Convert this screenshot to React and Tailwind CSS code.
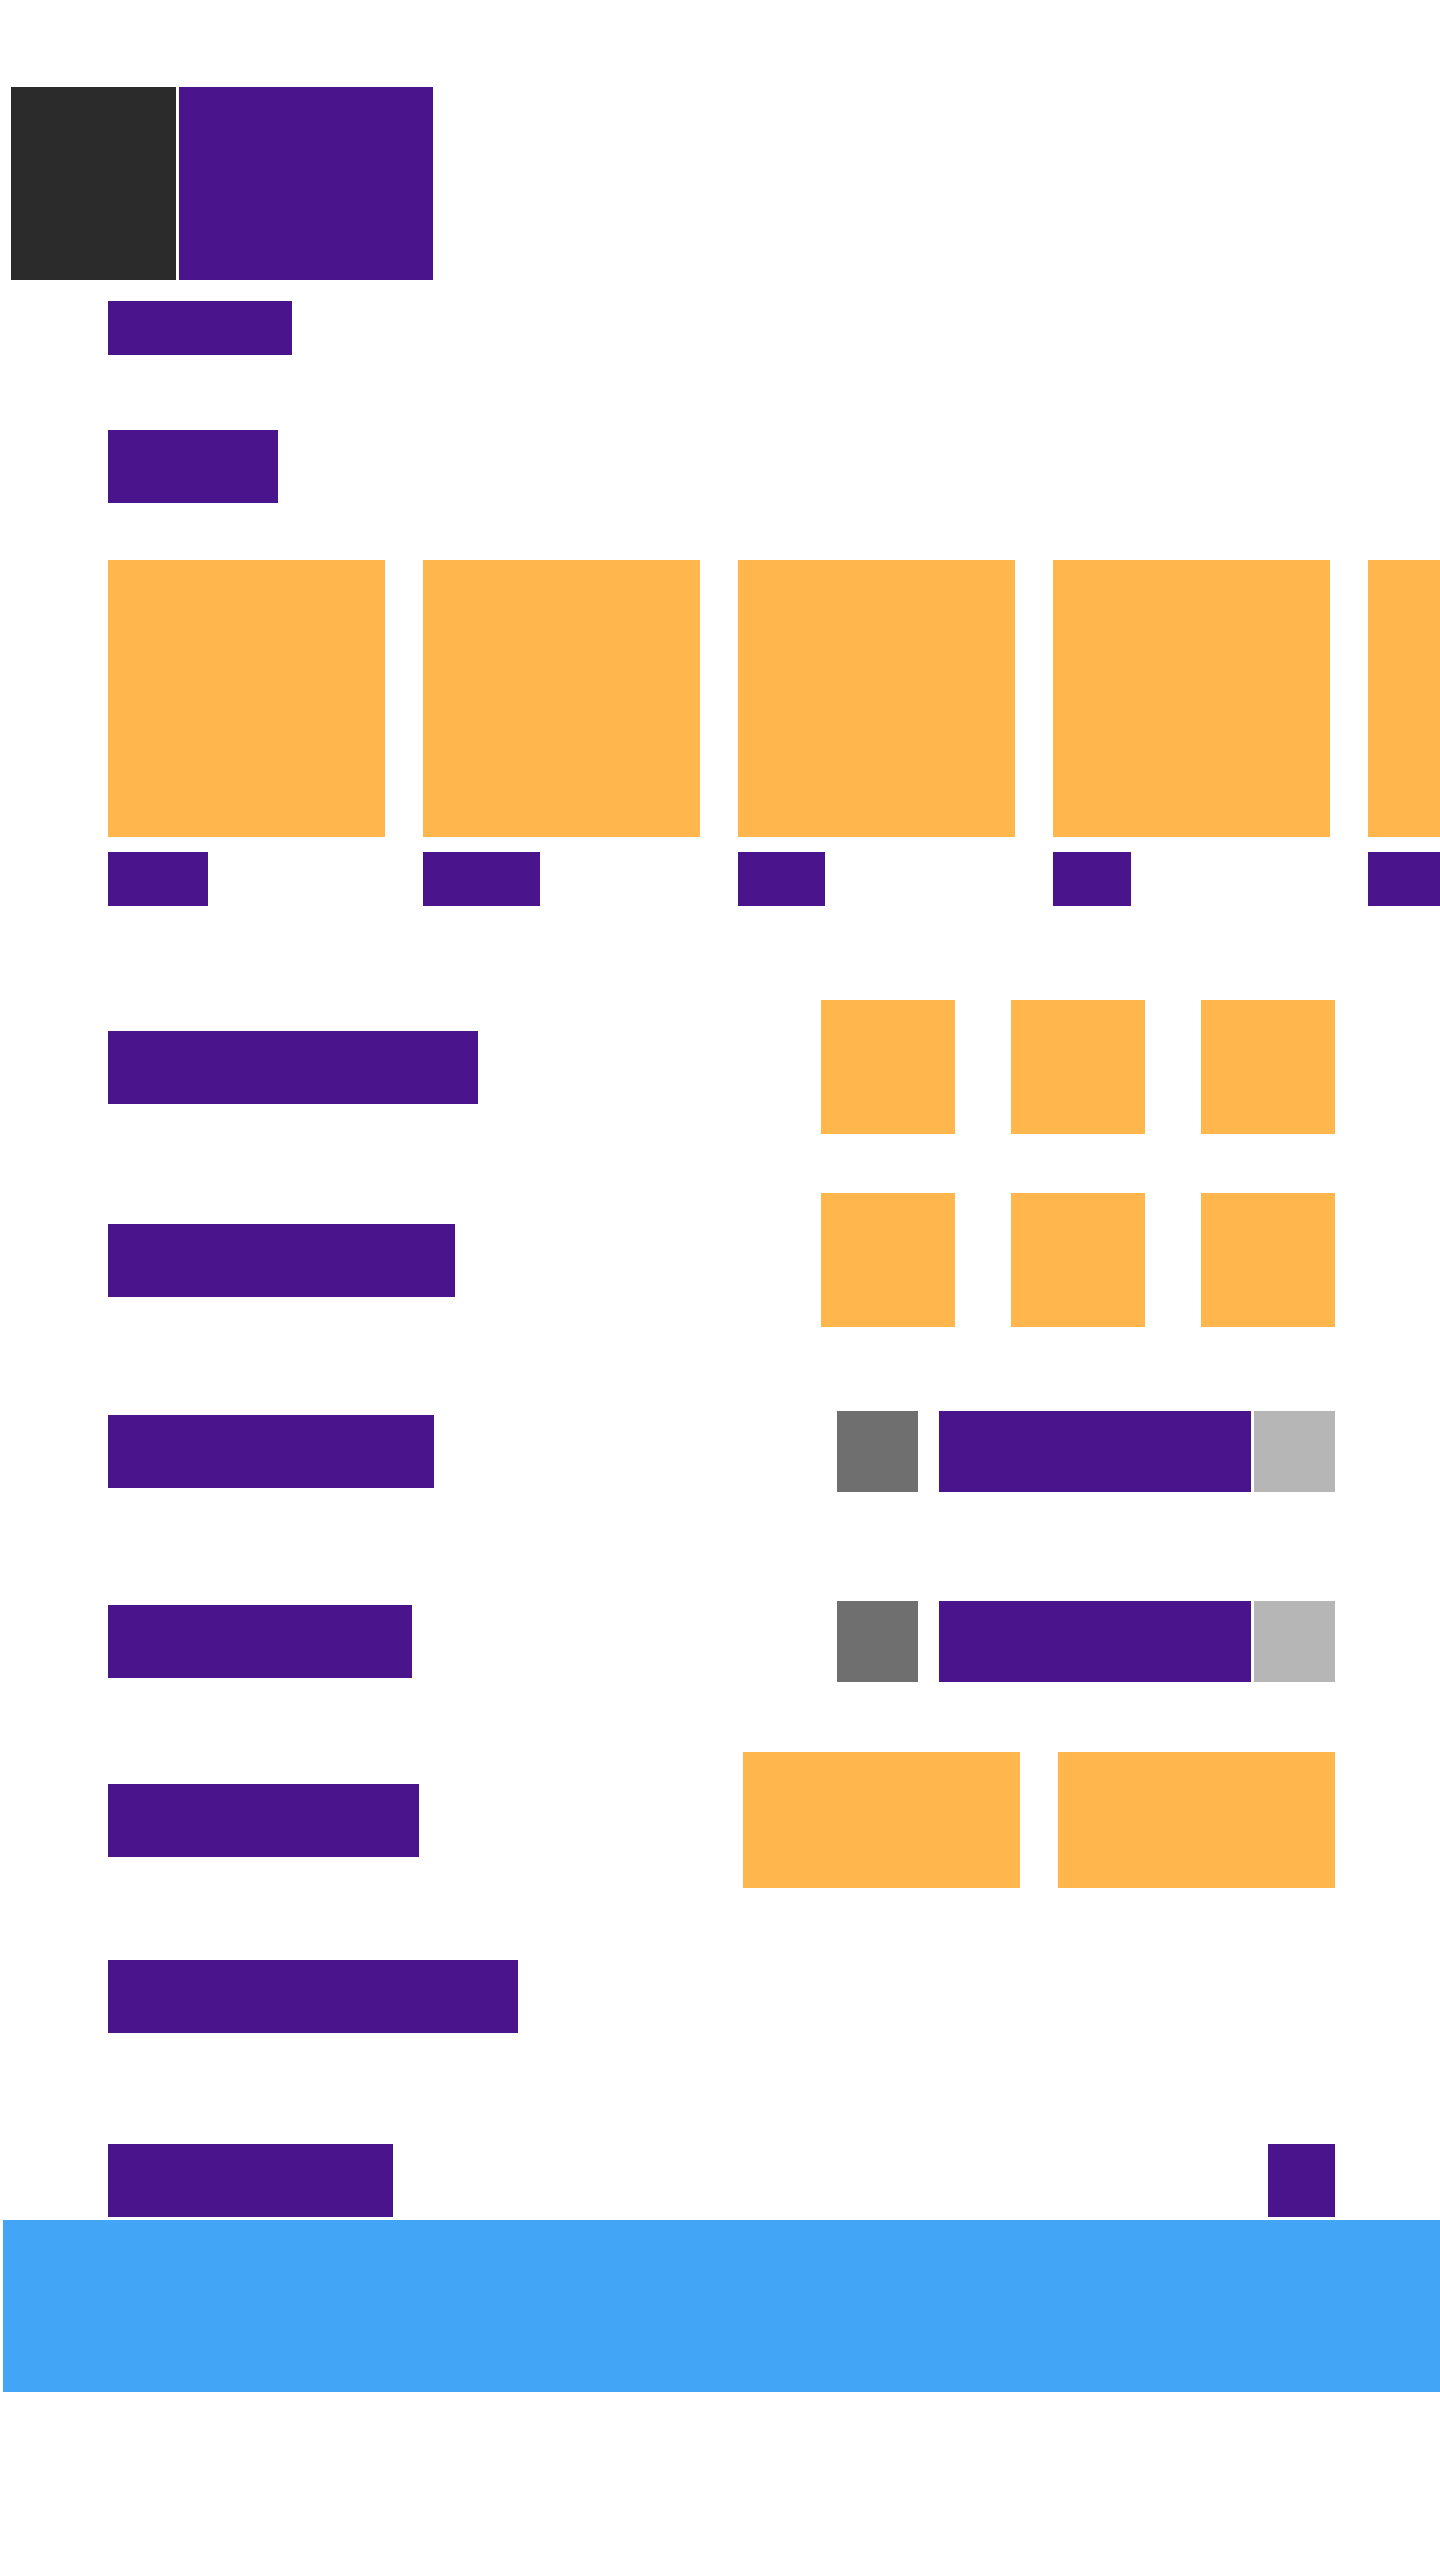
export default function App() {
  const labels = [100, 117, 87, 78, 100];
  return (
    <div className="w-[1440px] min-h-[2560px] bg-white overflow-hidden flex flex-col pt-[87px]">
      <header className="flex pl-[11px] gap-[3px]">
        <div className="w-[165px] h-[193px] bg-[#2b2b2b]" />
        <div className="w-[254px] h-[193px] bg-[#4a148c]" />
      </header>
      <main className="flex flex-col pl-[108px] pr-[105px]">
        <div className="mt-[21px] w-[184px] h-[54px] bg-[#4a148c]" />
        <div className="mt-[75px] w-[170px] h-[73px] bg-[#4a148c]" />
        <div className="mt-[57px] -mr-[105px] flex gap-[38px] overflow-hidden">
          {labels.map((w, i) => (
            <div key={i} className="flex flex-col shrink-0 w-[277px]">
              <div className="w-[277px] h-[277px] bg-[#ffb74d]" />
              <div className="mt-[15px] h-[54px] bg-[#4a148c]" style={{ width: w }} />
            </div>
          ))}
        </div>
        <div className="mt-[94px] h-[134px] flex items-center justify-between">
          <div className="w-[370px] h-[73px] bg-[#4a148c]" />
          <div className="flex gap-[56px]">
            <div className="w-[134px] h-[134px] bg-[#ffb74d]" />
            <div className="w-[134px] h-[134px] bg-[#ffb74d]" />
            <div className="w-[134px] h-[134px] bg-[#ffb74d]" />
          </div>
        </div>
        <div className="mt-[59px] h-[134px] flex items-center justify-between">
          <div className="w-[347px] h-[73px] bg-[#4a148c]" />
          <div className="flex gap-[56px]">
            <div className="w-[134px] h-[134px] bg-[#ffb74d]" />
            <div className="w-[134px] h-[134px] bg-[#ffb74d]" />
            <div className="w-[134px] h-[134px] bg-[#ffb74d]" />
          </div>
        </div>
        <div className="mt-[84px] h-[81px] flex items-center justify-between">
          <div className="w-[326px] h-[73px] bg-[#4a148c]" />
          <div className="flex">
            <div className="w-[81px] h-[81px] bg-[#6f6f6f]" />
            <div className="ml-[21px] w-[312px] h-[81px] bg-[#4a148c]" />
            <div className="ml-[3px] w-[81px] h-[81px] bg-[#b6b6b6]" />
          </div>
        </div>
        <div className="mt-[109px] h-[81px] flex items-center justify-between">
          <div className="w-[304px] h-[73px] bg-[#4a148c]" />
          <div className="flex">
            <div className="w-[81px] h-[81px] bg-[#6f6f6f]" />
            <div className="ml-[21px] w-[312px] h-[81px] bg-[#4a148c]" />
            <div className="ml-[3px] w-[81px] h-[81px] bg-[#b6b6b6]" />
          </div>
        </div>
        <div className="mt-[70px] h-[136px] flex items-center justify-between">
          <div className="w-[311px] h-[73px] bg-[#4a148c]" />
          <div className="flex gap-[38px]">
            <div className="w-[277px] h-[136px] bg-[#ffb74d]" />
            <div className="w-[277px] h-[136px] bg-[#ffb74d]" />
          </div>
        </div>
        <div className="mt-[72px] h-[73px] flex items-center">
          <div className="w-[410px] h-[73px] bg-[#4a148c]" />
        </div>
        <div className="mt-[111px] h-[73px] flex items-center justify-between">
          <div className="w-[285px] h-[73px] bg-[#4a148c]" />
          <div className="w-[67px] h-[73px] bg-[#4a148c]" />
        </div>
      </main>
      <footer className="mt-[3px] ml-[3px] h-[172px] bg-[#42a5f5]" />
    </div>
  );
}
